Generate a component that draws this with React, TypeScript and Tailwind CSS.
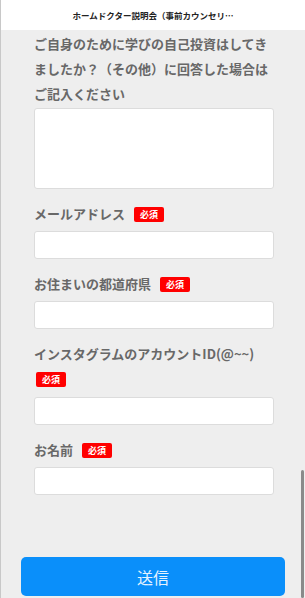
import { useState } from "react";

const font = { fontFamily: '"Noto Sans CJK JP", "Noto Sans", sans-serif' };

const badgeCls =
  "inline-block align-middle px-[6px] h-[15px] leading-[15px] rounded-[2px] bg-[#ff0000] text-white text-[9px] font-bold relative -top-[1px]";

type FieldProps = {
  label: string;
  value: string;
  onChange: (v: string) => void;
  badgeBelow?: boolean;
};

function Field({ label, value, onChange, badgeBelow }: FieldProps) {
  return (
    <div className="mt-[12px]">
      <div className="text-[13px] leading-[25px] font-bold text-[#686868] mb-[5px]">
        {label}
        {badgeBelow ? (
          <div className="h-[26px] leading-[26px]">
            <span className={badgeCls + " ml-[2px]"}>必須</span>
          </div>
        ) : (
          <span className={badgeCls + " ml-[9px]"}>必須</span>
        )}
      </div>
      <input
        type="text"
        value={value}
        onChange={(e) => onChange(e.target.value)}
        className="block w-full h-[28px] bg-white border border-[#dcdcdc] rounded-[3px] px-2 text-[13px] outline-none"
      />
    </div>
  );
}

export default function App() {
  const [other, setOther] = useState("");
  const [email, setEmail] = useState("");
  const [pref, setPref] = useState("");
  const [insta, setInsta] = useState("");
  const [name, setName] = useState("");

  return (
    <div
      className="relative w-[305px] h-[598px] overflow-hidden bg-[#eeeeee] border-l border-[#c8c8c8] flex flex-col"
      style={font}
    >
      <div className="h-[30px] shrink-0 bg-white flex items-center justify-center text-[8.5px] font-bold text-[#222222]">
        ホームドクター説明会（事前カウンセリ…
      </div>

      <div className="pl-[33px] pr-[31px]">
        <div className="text-[13px] leading-[25px] font-bold text-[#686868] mt-[0.5px]">
          ご自身のために学びの自己投資はしてきましたか？（その他）に回答した場合はご記入ください
        </div>
        <textarea
          value={other}
          onChange={(e) => setOther(e.target.value)}
          className="block w-full h-[81px] mt-[2.5px] bg-white border border-[#dcdcdc] rounded-[3px] p-2 text-[13px] outline-none resize-none"
        />

        <Field label="メールアドレス" value={email} onChange={setEmail} />
        <Field label="お住まいの都道府県" value={pref} onChange={setPref} />
        <Field label="インスタグラムのアカウントID(@~~)" value={insta} onChange={setInsta} badgeBelow />
        <Field label="お名前" value={name} onChange={setName} />
      </div>

      <div className="px-[20px] mt-[62px]">
        <button className="w-full h-[39px] rounded-[5px] bg-[#0a8ffa] text-[#e6f3ff] text-[16px]">
          送信
        </button>
      </div>

      <div className="absolute right-[1px] top-[470px] w-[3px] h-[128px] rounded-full bg-[#8a8a8a]" />
    </div>
  );
}
